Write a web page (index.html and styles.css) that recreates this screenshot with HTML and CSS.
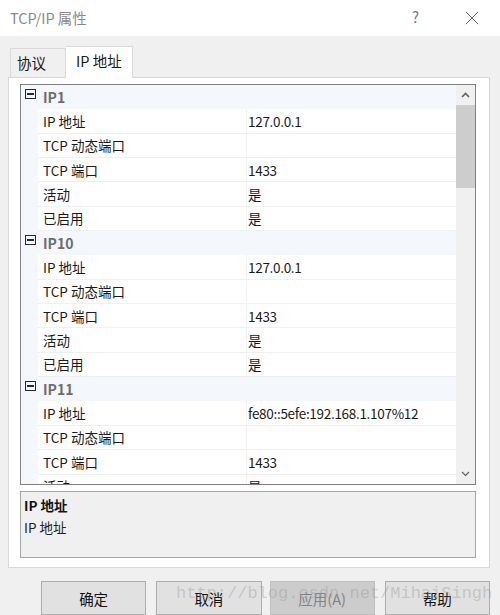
FILE: index.html
```html
<!DOCTYPE html>
<html lang="zh">
<head>
<meta charset="utf-8">
<title>TCP/IP 属性</title>
<link rel="stylesheet" href="styles.css">
</head>
<body>
<div class="window">
  <div class="titlebar">
    <span class="title">TCP/IP 属性</span>
    <span class="help">?</span>
    <svg class="close" width="16" height="16" viewBox="0 0 16 16"><path d="M1 1L15 15M15 1L1 15" stroke="#5a5a5a" stroke-width="1.1" fill="none"/></svg>
  </div>
  <div class="content">
    <div class="tabs">
      <div class="tab">协议</div>
      <div class="tab active">IP 地址</div>
    </div>
    <div class="page">
      <div class="grid">
        <div class="rows">
          <div class="row cat"><span class="gut"><i class="tog"></i></span><span class="name">IP1</span></div>
          <div class="row"><span class="gut"></span><span class="name">IP 地址</span><span class="val">127.0.0.1</span></div>
          <div class="row"><span class="gut"></span><span class="name">TCP 动态端口</span><span class="val"></span></div>
          <div class="row"><span class="gut"></span><span class="name">TCP 端口</span><span class="val">1433</span></div>
          <div class="row"><span class="gut"></span><span class="name">活动</span><span class="val">是</span></div>
          <div class="row"><span class="gut"></span><span class="name">已启用</span><span class="val">是</span></div>
          <div class="row cat"><span class="gut"><i class="tog"></i></span><span class="name">IP10</span></div>
          <div class="row"><span class="gut"></span><span class="name">IP 地址</span><span class="val">127.0.0.1</span></div>
          <div class="row"><span class="gut"></span><span class="name">TCP 动态端口</span><span class="val"></span></div>
          <div class="row"><span class="gut"></span><span class="name">TCP 端口</span><span class="val">1433</span></div>
          <div class="row"><span class="gut"></span><span class="name">活动</span><span class="val">是</span></div>
          <div class="row"><span class="gut"></span><span class="name">已启用</span><span class="val">是</span></div>
          <div class="row cat"><span class="gut"><i class="tog"></i></span><span class="name">IP11</span></div>
          <div class="row"><span class="gut"></span><span class="name">IP 地址</span><span class="val">fe80::5efe:192.168.1.107%12</span></div>
          <div class="row"><span class="gut"></span><span class="name">TCP 动态端口</span><span class="val"></span></div>
          <div class="row"><span class="gut"></span><span class="name">TCP 端口</span><span class="val">1433</span></div>
          <div class="row"><span class="gut"></span><span class="name">活动</span><span class="val">是</span></div>
        </div>
        <div class="scrollbar">
          <svg class="arrow" width="19" height="20" viewBox="0 0 19 20"><path d="M6 12L9.5 8.5L13 12" stroke="#606060" stroke-width="1.6" fill="none"/></svg>
          <div class="track"><div class="thumb"></div></div>
          <svg class="arrow" width="19" height="20" viewBox="0 0 19 20"><path d="M6 8L9.5 11.5L13 8" stroke="#606060" stroke-width="1.2" fill="none"/></svg>
        </div>
      </div>
      <div class="desc">
        <div class="desc-title">IP 地址</div>
        <div class="desc-text">IP 地址</div>
      </div>
    </div>
    <div class="buttons">
      <button class="btn">确定</button>
      <button class="btn">取消</button>
      <button class="btn disabled">应用(A)</button>
      <button class="btn">帮助</button>
    </div>
  </div>
  <div class="watermark">http://blog.csdn.net/MihaiSingh</div>
</div>
</body>
</html>
```

FILE: styles.css
```css
* { box-sizing: border-box; }
html, body { margin: 0; padding: 0; }
body {
  width: 500px;
  height: 615px;
  overflow: hidden;
  background: #f0f0f0;
  font-family: "Noto Sans CJK SC", "Open Sans", sans-serif;
  font-size: 13.5px;
  color: #1a1a1a;
}
.window { position: relative; width: 500px; height: 615px; }
.titlebar {
  height: 36px;
  background: #ffffff;
  display: flex;
  align-items: center;
  padding-left: 10px;
}
.title { font-size: 14.5px; color: #8a8a8a; flex: 1; margin-top: -1px; }
.help { font-size: 15px; color: #7a7a7a; margin-right: 46px; margin-top: -3px; }
.close { margin-right: 21px; width: 14px; height: 14px; margin-top: -1px; }

.content { padding: 10px 0 0 8px; }
.tabs { display: flex; align-items: flex-end; height: 31px; padding-left: 2px; }
.tab {
  height: 29px;
  width: 56px;
  border: 1px solid #d9d9d9;
  border-bottom: none;
  background: #f0f0f0;
  font-size: 14.5px;
  padding-left: 6px;
  line-height: 28px;
}
.tab.active {
  height: 32px;
  width: 67px;
  background: #ffffff;
  border-left: none;
  margin-bottom: -1px;
  position: relative;
  z-index: 1;
  padding-left: 10px;
  line-height: 28px;
}
.page {
  width: 482px;
  height: 491px;
  background: #ffffff;
  border: 1px solid #d9d9d9;
  padding: 6px 0 0 11px;
}
.grid {
  width: 456px;
  height: 401px;
  border: 1px solid #7f7f7f;
  display: flex;
  background: #ffffff;
}
.rows { flex: 1; overflow: hidden; }
.row {
  height: 24.35px;
  display: grid;
  grid-template-columns: 17px 208px 1fr;
  align-items: stretch;
}
.row .gut { background: #f4f7fc; display: flex; align-items: center; justify-content: center; }
.row .name {
  display: flex; align-items: center;
  padding-left: 5px;
  border-bottom: 1px solid #f0f0f0;
  white-space: nowrap;
}
.row .val {
  display: flex; align-items: center;
  padding-left: 1px;
  letter-spacing: -0.3px;
  border-left: 1px solid #f0f0f0;
  border-bottom: 1px solid #f0f0f0;
  white-space: nowrap;
}
.row.cat { background: #f4f7fc; grid-template-columns: 17px 1fr; }
.row.cat .name { font-weight: bold; color: #6d6d6d; border-bottom: none; font-size: 14px; padding-left: 5px; }
.tog {
  display: block;
  width: 11px; height: 10px;
  border: 1.5px solid #2a2a2a;
  position: relative;
  margin-top: -6px;
  margin-left: 1px;
}
.tog::after {
  content: "";
  position: absolute;
  left: 1px; right: 1px; top: 3px;
  height: 1.5px;
  background: #2a2a2a;
}
.scrollbar {
  width: 19px;
  background: #f0f0f0;
  display: flex;
  flex-direction: column;
}
.arrow { display: block; flex: none; }
.track { flex: 1; }
.thumb { height: 83px; background: #cdcdcd; }

.desc {
  width: 456px;
  height: 67px;
  margin-top: 6px;
  border: 1px solid #a7a7a7;
  background: #f0f0f0;
  padding: 3px 0 0 3px;
  font-size: 13.5px;
}
.desc-title { font-weight: bold; line-height: 21px; color: #111; }
.desc-text { line-height: 22px; color: #222; }

.buttons {
  display: flex;
  margin-top: 13px;
  padding-left: 33px;
}
.btn {
  width: 106px;
  height: 34px;
  margin-right: 10px;
  border: 1px solid #adadad;
  background: #e1e1e1;
  font-family: "Noto Sans CJK SC", "Open Sans", sans-serif;
  font-size: 14.5px;
  color: #111;
  padding: 0;
}
.btn:nth-child(2) { margin-right: 8px; }
.btn.disabled { background: #cccccc; border-color: #bfbfbf; color: #838383; }

.watermark {
  position: absolute;
  left: 176px;
  top: 584px;
  font-family: "Liberation Mono", monospace;
  font-size: 17px;
  color: rgba(150, 150, 150, 0.4);
  pointer-events: none;
  white-space: nowrap;
}
```
